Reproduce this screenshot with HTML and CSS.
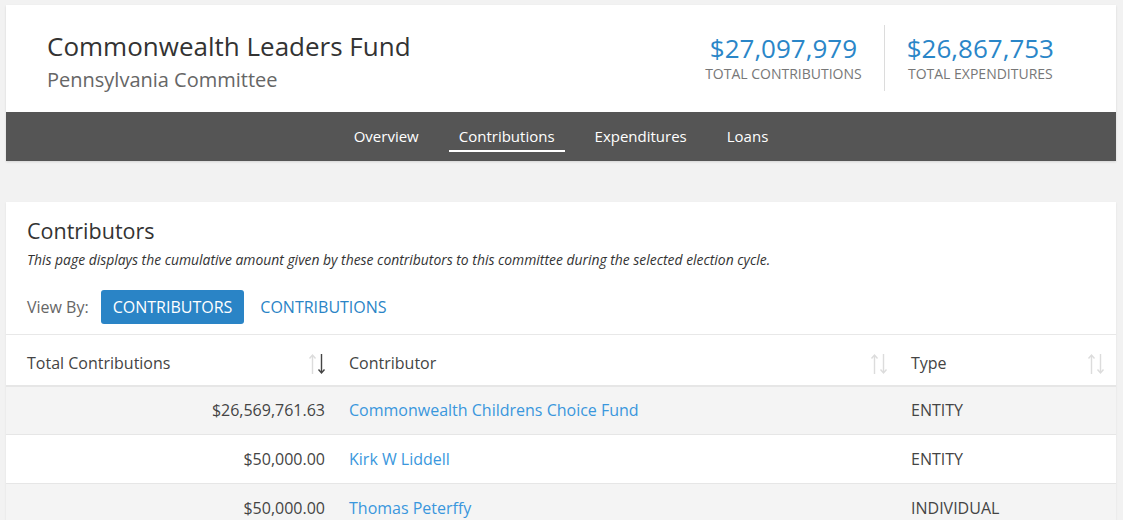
FILE: index.html
```html
<!DOCTYPE html>
<html>
<head>
<meta charset="utf-8">
<link rel="stylesheet" href="styles.css">
</head>
<body>
<div class="container">
  <div class="header-card">
    <div class="header-main">
      <div class="titles">
        <h1 class="title">Commonwealth Leaders Fund</h1>
        <div class="subtitle">Pennsylvania Committee</div>
      </div>
      <div class="stats">
        <div class="stat">
          <div class="stat-value">$27,097,979</div>
          <div class="stat-label">TOTAL CONTRIBUTIONS</div>
        </div>
        <div class="stat-divider"></div>
        <div class="stat">
          <div class="stat-value">$26,867,753</div>
          <div class="stat-label">TOTAL EXPENDITURES</div>
        </div>
      </div>
    </div>
    <nav class="nav">
      <a class="nav-item">Overview</a>
      <a class="nav-item active">Contributions</a>
      <a class="nav-item">Expenditures</a>
      <a class="nav-item">Loans</a>
    </nav>
  </div>

  <div class="content-card">
    <div class="content-head">
      <h2 class="section-title">Contributors</h2>
      <p class="section-desc">This page displays the cumulative amount given by these contributors to this committee during the selected election cycle.</p>
      <div class="view-by">
        <span class="view-label">View By:</span>
        <span class="btn btn-active">CONTRIBUTORS</span>
        <span class="btn btn-link">CONTRIBUTIONS</span>
      </div>
    </div>
    <table class="table">
      <thead>
        <tr>
          <th class="col-amount"><div class="th-inner"><span>Total Contributions</span>
            <svg class="sort" width="20" height="22" viewBox="0 0 20 22"><path d="M4.5 2 V21 M1.5 5.5 L4.5 2 L7.5 5.5" stroke="#dcdcdc" stroke-width="1.4" fill="none"/><path d="M13.5 1 V20 M10.5 16.5 L13.5 20 L16.5 16.5" stroke="#444" stroke-width="1.4" fill="none"/></svg></div></th>
          <th class="col-name"><div class="th-inner"><span>Contributor</span>
            <svg class="sort" width="20" height="22" viewBox="0 0 20 22"><path d="M4.5 2 V21 M1.5 5.5 L4.5 2 L7.5 5.5" stroke="#dcdcdc" stroke-width="1.4" fill="none"/><path d="M13.5 1 V20 M10.5 16.5 L13.5 20 L16.5 16.5" stroke="#dcdcdc" stroke-width="1.4" fill="none"/></svg></div></th>
          <th class="col-type"><div class="th-inner"><span>Type</span>
            <svg class="sort" width="20" height="22" viewBox="0 0 20 22"><path d="M4.5 2 V21 M1.5 5.5 L4.5 2 L7.5 5.5" stroke="#dcdcdc" stroke-width="1.4" fill="none"/><path d="M13.5 1 V20 M10.5 16.5 L13.5 20 L16.5 16.5" stroke="#dcdcdc" stroke-width="1.4" fill="none"/></svg></div></th>
        </tr>
      </thead>
      <tbody>
        <tr class="odd">
          <td class="amount">$26,569,761.63</td>
          <td><a class="link">Commonwealth Childrens Choice Fund</a></td>
          <td>ENTITY</td>
        </tr>
        <tr>
          <td class="amount">$50,000.00</td>
          <td><a class="link">Kirk W Liddell</a></td>
          <td>ENTITY</td>
        </tr>
        <tr class="odd">
          <td class="amount">$50,000.00</td>
          <td><a class="link">Thomas Peterffy</a></td>
          <td>INDIVIDUAL</td>
        </tr>
      </tbody>
    </table>
  </div>
</div>
</body>
</html>
```

FILE: styles.css
```css
* { box-sizing: border-box; }
html, body { margin: 0; padding: 0; }
body {
  background: #f2f2f2;
  font-family: "Open Sans", "Liberation Sans", sans-serif;
  color: #333;
  overflow: hidden;
}
.container {
  width: 1110px;
  margin: 5px 0 0 6px;
}
.header-card {
  background: #fff;
  box-shadow: 0 1px 2px rgba(0,0,0,0.12);
}
.header-main {
  display: flex;
  justify-content: space-between;
  align-items: flex-start;
  height: 107px;
  padding: 0 40px 0 41px;
}
.titles { padding-top: 25px; }
.title {
  margin: 0;
  font-size: 26px;
  font-weight: 400;
  line-height: 32px;
  color: #333;
}
.subtitle {
  font-size: 20px;
  line-height: 28px;
  margin-top: 4px;
  color: #666;
}
.stats {
  display: flex;
  align-items: stretch;
  padding-top: 20px;
}
.stat {
  padding: 5px 22px 0;
  text-align: center;
}
.stat-value {
  font-size: 26px;
  line-height: 36px;
  color: #2a86c8;
}
.stat-divider {
  width: 1px;
  height: 66px;
  background: #dcdcdc;
}
.stat-label {
  font-size: 14px;
  line-height: 16px;
  color: #777;
}
.nav {
  background: #555;
  height: 49px;
  display: flex;
  justify-content: center;
  gap: 20px;
}
.nav-item {
  color: #fff;
  font-size: 15px;
  line-height: 20px;
  padding: 14px 10px 0;
  height: 40px;
}
.nav-item.active {
  border-bottom: 2px solid #fff;
}
.content-card {
  background: #fff;
  margin-top: 41px;
  box-shadow: 0 1px 2px rgba(0,0,0,0.08);
}
.content-head {
  padding: 15px 21px 10px;
}
.section-title {
  margin: 0;
  font-size: 21.5px;
  font-weight: 400;
  line-height: 28px;
  color: #333;
}
.section-desc {
  margin: 5px 0 0;
  font-size: 13.9px;
  font-style: italic;
  line-height: 20px;
  color: #333;
}
.view-by {
  display: flex;
  align-items: center;
  margin-top: 20px;
  height: 34px;
}
.view-label {
  font-size: 16px;
  color: #666;
  margin-right: 12px;
}
.btn {
  font-size: 16px;
  line-height: 22px;
  padding: 6px 12px;
  border-radius: 3px;
}
.btn-active {
  background: #2a84c6;
  color: #fff;
}
.btn-link {
  color: #2a84c6;
  margin-left: 4px;
}
.table {
  width: 100%;
  border-collapse: collapse;
  table-layout: fixed;
  border-top: 1px solid #e8e8e8;
}
.col-amount { width: 331px; }
.col-name { width: 562px; }
.col-type { width: 217px; }
th {
  font-weight: 400;
  font-size: 16px;
  color: #444;
  text-align: left;
  height: 51px;
  padding: 6px 9px 0 12px;
  border-bottom: 2px solid #e6e6e6;
}
th.col-amount { padding-left: 21px; }
.th-inner {
  display: flex;
  justify-content: space-between;
  align-items: center;
}
.sort { display: block; margin-top: 3px; }
td {
  font-size: 16px;
  color: #444;
  height: 49px;
  padding: 0 12px;
  border-bottom: 1px solid #e6e6e6;
}
td.amount { text-align: right; }
tr.odd td { background: #f4f4f4; }
.link {
  color: #3a97dd;
  text-decoration: none;
}
```
